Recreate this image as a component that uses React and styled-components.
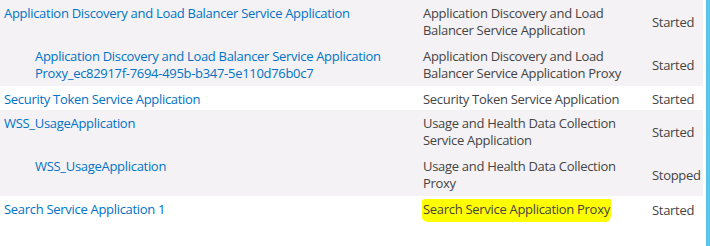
import React from 'react'
import styled, { createGlobalStyle } from 'styled-components'

const GlobalStyle = createGlobalStyle`
  html, body {
    margin: 0;
    padding: 0;
    background: #fff;
  }
  body {
    font-family: "Open Sans", "Noto Sans", sans-serif;
    font-size: 13px;
    letter-spacing: -0.3px;
  }
`

const rows = [
    { name: ['Application Discovery and Load Balancer Service Application'], type: ['Application Discovery and Load', 'Balancer Service Application'], status: 'Started', shade: true },
    { name: ['Application Discovery and Load Balancer Service Application', 'Proxy_ec82917f-7694-495b-b347-5e110d76b0c7'], type: ['Application Discovery and Load', 'Balancer Service Application Proxy'], status: 'Started', shade: true, child: true },
    { name: ['Security Token Service Application'], type: ['Security Token Service Application'], status: 'Started' },
    { name: ['WSS_UsageApplication'], type: ['Usage and Health Data Collection', 'Service Application'], status: 'Started', shade: true },
    { name: ['WSS_UsageApplication'], type: ['Usage and Health Data Collection', 'Proxy'], status: 'Stopped', shade: true, child: true },
    { name: ['Search Service Application 1'], type: ['Search Service Application Proxy'], status: 'Started', marked: true },
]

const App = () => {
  return (
    <Page>
        <GlobalStyle />
        <Table>
            {rows.map((row, key) =>
                <Row key={key} $shade={row.shade} $tall={row.type.length > 1 || row.name.length > 1}>
                    <NameCell $child={row.child}>
                        <NameLink href="#">{row.name.map((l, i) => <Line key={i}>{l}</Line>)}</NameLink>
                    </NameCell>
                    <TypeCell>
                        {row.marked
                            ? <Marker>{row.type[0]}</Marker>
                            : row.type.map((l, i) => <Line key={i}>{l}</Line>)}
                    </TypeCell>
                    <StatusCell>{row.status}</StatusCell>
                </Row>
            )}
        </Table>
        <Edge />
    </Page>
  )
}

const Page = styled.div`
    display: flex;
    height: 246px;
    width: 710px;
    overflow: hidden;
`

const Table = styled.div`
    width: 703px;
    display: flex;
    flex-direction: column;
`

const Row = styled.div`
    display: grid;
    grid-template-columns: 419px 229px 55px;
    background: ${p => p.$shade ? '#f5f2f5' : '#fff'};
    height: ${p => p.$tall ? '43px' : '24px'};
    box-sizing: border-box;
`

const Cell = styled.div`
    padding: 5px 4px 0 4px;
    line-height: 17px;
`

const NameCell = styled(Cell)`
    padding-left: ${p => p.$child ? '35px' : '4px'};
`

const NameLink = styled.a`
    color: #0072c6;
    text-decoration: none;
`

const Line = styled.span`
    display: block;
    white-space: nowrap;
`

const TypeCell = styled(Cell)`
    color: #444;
`

const StatusCell = styled(Cell)`
    color: #444;
    padding-top: 2px;
    display: flex;
    align-items: center;
`

const Marker = styled.span`
    display: inline-block;
    white-space: nowrap;
    background: #ffff00;
    margin-left: -1px;
    padding: 2px 1px 4px 1px;
    border-radius: 3px 2px 5px 6px / 3px 2px 7px 5px;
    margin-top: -2px;
`

const Edge = styled.div`
    width: 4px;
    margin-left: 3px;
    background: #5ac4ec;
`

export default App
